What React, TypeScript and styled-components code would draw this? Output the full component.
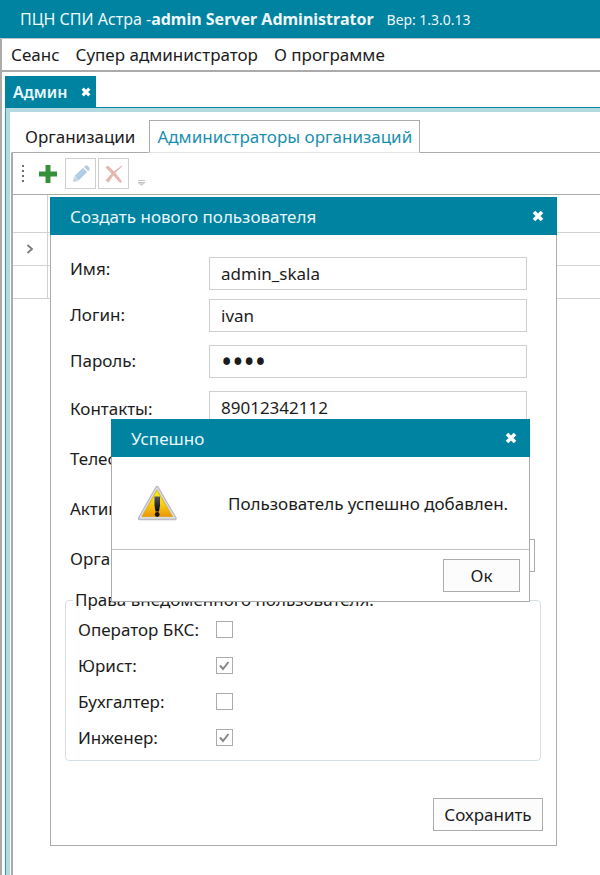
import React from "react";
import styled, { createGlobalStyle } from "styled-components";

const teal = "#0082a1";
const gray = "#ababab";

const GlobalStyle = createGlobalStyle`
  *, *::before, *::after { box-sizing: border-box; }
  html, body { margin: 0; background: #fff; }
  body, button, input, select {
    font-family: "Noto Sans", "Open Sans", sans-serif;
    font-size: 17px;
    color: #1c1c1c;
  }
`;

const Window = styled.div`
  position: relative;
  display: flex;
  flex-direction: column;
  min-height: 100vh;
  overflow: hidden;
`;

const TitleBar = styled.header`
  display: flex;
  align-items: center;
  gap: 13px;
  height: 39px;
  padding-left: 20px;
  background: ${teal};
  border-bottom: 1px solid #b5c5c9;
  color: #eef8fa;
  white-space: nowrap;
`;

const AppTitle = styled.h1`
  margin: 0;
  font-size: 16px;
  font-weight: 400;
`;

const Version = styled.span`
  font-size: 14px;
`;

const Frame = styled.div`
  display: flex;
  flex-direction: column;
  flex: 1;
  border-left: 2px solid ${gray};
`;

const MenuBar = styled.nav`
  display: flex;
  align-items: center;
  gap: 16px;
  height: 33px;
  padding-left: 9px;
  border-bottom: 2px solid ${gray};
`;

const MenuItem = styled.button`
  padding: 0;
  border: 0;
  background: none;
  white-space: nowrap;
`;

const DocumentTabs = styled.div`
  display: flex;
  padding: 4px 0 0 3px;
`;

const DocumentTab = styled.div`
  display: flex;
  align-items: center;
  gap: 14px;
  height: 31px;
  padding: 0 5px 0 8px;
  background: ${teal};
  color: #e8f6f9;
  font-size: 16px;
  font-weight: 600;
`;

const IconButton = styled.button`
  display: flex;
  align-items: center;
  justify-content: center;
  padding: 0;
  border: 0;
  background: none;
  color: #fff;
`;

const Workspace = styled.main`
  display: flex;
  flex-direction: column;
  flex: 1;
  margin-left: 3px;
  border-top: 1px solid ${teal};
  border-left: 1px solid #2f9cb6;
`;

const Panel = styled.div`
  display: flex;
  flex-direction: column;
  flex: 1;
  padding: 8px 0 0 1px;
  border-top: 4px solid #b3d9e1;
  border-left: 4px solid #b3d9e1;
`;

const TabStrip = styled.div`
  display: flex;
  height: 33px;
  box-shadow: inset 0 -1px 0 ${gray};
`;

const Tab = styled.button<{ $active?: boolean }>`
  padding: ${(p) => (p.$active ? "0 7px" : "0 13px")};
  border: 1px solid ${(p) => (p.$active ? gray : "transparent")};
  border-bottom-color: ${(p) => (p.$active ? "#e4e4e4" : gray)};
  background: #fff;
  color: ${(p) => (p.$active ? "#1a8fae" : "#1c1c1c")};
  white-space: nowrap;
`;

const TabBody = styled.div`
  display: flex;
  flex-direction: column;
  flex: 1;
  border-left: 2px solid ${gray};
`;

const Toolbar = styled.div`
  display: flex;
  align-items: center;
  height: 42px;
  padding-left: 8px;
  border-bottom: 1px solid ${gray};
`;

const ToolButton = styled.button<{ $framed?: boolean }>`
  display: flex;
  align-items: center;
  justify-content: center;
  width: 31px;
  height: 31px;
  margin-right: 2px;
  padding: 0;
  border: ${(p) => (p.$framed ? "1px solid #cfcfcf" : "0")};
  background: #fff;
`;

const Overflow = styled.div`
  align-self: flex-end;
  display: flex;
  padding: 0 0 8px 7px;
`;

const Records = styled.table`
  width: 100%;
  border-collapse: collapse;
  table-layout: fixed;
`;

const RecordCell = styled.td<{ $head?: boolean; $marker?: boolean }>`
  width: ${(p) => (p.$marker ? "34px" : "auto")};
  height: ${(p) => (p.$head ? "37px" : "33px")};
  padding: 0 0 0 13px;
  border-bottom: 1px solid #d2d2d2;
  border-right: ${(p) => (p.$marker ? "1px solid #d2d2d2" : "0")};
  line-height: 0;
`;

const UserDialog = styled.section`
  position: absolute;
  top: 197px;
  left: 50px;
  right: 43px;
  border: 1px solid ${gray};
  border-top: 0;
  background: #fff;
`;

const AlertDialog = styled.section`
  position: absolute;
  top: 419px;
  left: 111px;
  right: 70px;
  border: 1px solid ${gray};
  border-top: 0;
  background: #fff;
`;

const DialogTitle = styled.div`
  display: flex;
  align-items: center;
  justify-content: space-between;
  height: 38px;
  margin: 0 -1px;
  padding: 0 13px 0 20px;
  background: ${teal};
  color: #e8f6f9;
`;

const DialogHeading = styled.h2`
  margin: 0;
  font-size: 17px;
  font-weight: 400;
`;

const Form = styled.form`
  display: flex;
  flex-direction: column;
  padding: 10px 13px 14px 14px;
`;

const Field = styled.div<{ $tall?: boolean }>`
  display: grid;
  grid-template-columns: 139px 1fr;
  height: ${(p) => (p.$tall ? "50px" : "46px")};
  padding-left: 5px;
`;

const FieldLabel = styled.label`
  align-self: center;
`;

const TextInput = styled.input<{ $low?: boolean }>`
  width: calc(100% - 16px);
  height: 33px;
  margin-top: ${(p) => (p.$low ? "12px" : "8px")};
  padding: 0 11px;
  border: 1px solid #cfcfcf;
  border-radius: 0;
  background: #fff;
  outline: 0;
  &[type="password"] {
    font-size: 30px;
    line-height: 30px;
  }
`;

const Select = styled.select`
  width: calc(100% - 8px);
  height: 33px;
  margin-top: 6px;
  border: 1px solid ${gray};
  border-radius: 0;
  background: #fff;
  appearance: none;
`;

const Check = styled.input`
  appearance: none;
  align-self: center;
  width: 17px;
  height: 17px;
  margin: 0;
  border: 1px solid ${gray};
  background: #fff;
  &:checked {
    background: #fff
      url("data:image/svg+xml,%3Csvg xmlns='http://www.w3.org/2000/svg' viewBox='0 0 15 15'%3E%3Cpath d='M3 7.5 6 11 11.5 4' fill='none' stroke='%23858585' stroke-width='2'/%3E%3C/svg%3E")
      center / 15px 15px no-repeat;
  }
`;

const Rights = styled.fieldset`
  min-width: 0;
  margin: 6px 2px 0 0;
  padding: 0 12px 5px;
  border: 1px solid #d5e0e6;
  border-radius: 4px;
`;

const Legend = styled.legend`
  margin-left: -5px;
  padding: 0 2px;
  line-height: 22px;
`;

const Right = styled.div`
  display: grid;
  grid-template-columns: 138px 1fr;
  align-items: center;
  height: 36px;
`;

const PushButton = styled.button<{ $wide?: boolean }>`
  width: ${(p) => (p.$wide ? "110px" : "77px")};
  height: 33px;
  padding: 0;
  border: 1px solid ${gray};
  background: #fcfcfc;
`;

const FormActions = styled.div`
  display: flex;
  justify-content: flex-end;
  padding-top: 37px;
`;

const AlertBody = styled.div`
  display: flex;
  align-items: center;
  gap: 50px;
  height: 92px;
  padding: 0 0 0 25px;
  white-space: nowrap;
`;

const AlertText = styled.p`
  margin: 0;
`;

const AlertActions = styled.div`
  display: flex;
  justify-content: flex-end;
  padding: 9px;
  border-top: 1px solid #c4c4c4;
`;

const CloseIcon = ({ size = 12 }: { size?: number }) => (
  <svg width={size} height={size} viewBox="0 0 12 12" aria-hidden="true">
    <path d="M2 2 10 10M10 2 2 10" stroke="currentColor" strokeWidth="3.6" />
  </svg>
);

const Grip = styled.svg`
  flex: none;
  margin-right: 7px;
`;

const WarningIcon = () => (
  <svg width="41" height="36" viewBox="0 0 41 36" aria-hidden="true">
    <defs>
      <linearGradient id="amber" x1="0" y1="0" x2="0" y2="1">
        <stop offset="0" stopColor="#f5ef16" />
        <stop offset="0.5" stopColor="#f9d313" />
        <stop offset="1" stopColor="#ee9407" />
      </linearGradient>
      <linearGradient id="mark" x1="0" y1="0" x2="0" y2="1">
        <stop offset="0" stopColor="#556" />
        <stop offset="1" stopColor="#050505" />
      </linearGradient>
    </defs>
    <path d="M20 2.5 38 33.5H2.500Z" fill="#b9bcc2" stroke="#b9bcc2" strokeWidth="3.5" strokeLinejoin="round" />
    <path d="M20 3 37.500 33H3Z" fill="#dadce0" stroke="#dadce0" strokeWidth="1.500" strokeLinejoin="round" />
    <path d="M20 5 35.500 31.500H5Z" fill="url(#amber)" stroke="#d9a514" strokeWidth="0.800" strokeLinejoin="round" />
    <path d="M17.500 11.500h5.500v9l-1 6h-3.500l-1-6Z" fill="url(#mark)" />
    <circle cx="20.200" cy="29.500" r="2.400" fill="#15130c" />
  </svg>
);

const rights = [
  { id: "operator", label: "Оператор БКС:", on: false },
  { id: "lawyer", label: "Юрист:", on: true },
  { id: "accountant", label: "Бухгалтер:", on: false },
  { id: "engineer", label: "Инженер:", on: true },
];

export default function App() {
  return (
    <>
      <GlobalStyle />
      <Window>
        <TitleBar>
          <AppTitle>
            ПЦН СПИ Астра -<b>admin Server Administrator</b>
          </AppTitle>
          <Version>Вер: 1.3.0.13</Version>
        </TitleBar>
        <Frame>
          <MenuBar>
            <MenuItem>Сеанс</MenuItem>
            <MenuItem>Супер администратор</MenuItem>
            <MenuItem>О программе</MenuItem>
          </MenuBar>
          <DocumentTabs>
            <DocumentTab>
              Админ
              <IconButton aria-label="Закрыть вкладку">
                <CloseIcon size={10} />
              </IconButton>
            </DocumentTab>
          </DocumentTabs>
          <Workspace>
            <Panel>
              <TabStrip role="tablist">
                <Tab role="tab">Организации</Tab>
                <Tab role="tab" aria-selected $active>
                  Администраторы организаций
                </Tab>
              </TabStrip>
              <TabBody>
                <Toolbar>
                  <Grip width="4" height="18" viewBox="0 0 4 18">
                    <path d="M1 0h2v2H1zM1 5h2v2H1zM1 10h2v2H1zM1 15h2v2H1z" fill="#707070" />
                  </Grip>
                  <ToolButton aria-label="Добавить">
                    <svg width="18" height="18" viewBox="0 0 18 18">
                      <path d="M6.500 0h5v6.500H18v5h-6.500V18h-5v-6.500H0v-5h6.500Z" fill="#36903a" />
                    </svg>
                  </ToolButton>
                  <ToolButton $framed aria-label="Изменить">
                    <svg width="18" height="18" viewBox="0 0 18 18">
                      <path d="M1 17 2 11.500 6.500 16Z" fill="#c3d3e3" />
                      <path d="M2.500 11 11 3l4 4-8.500 8.500Z" fill="#adc9e4" />
                      <path d="m12 2 1.500-1.500h2L17.500 3v2L16 6Z" fill="#b4cbe1" />
                      <path d="M4 12.500 12 5" stroke="#c6daee" />
                    </svg>
                  </ToolButton>
                  <ToolButton $framed aria-label="Удалить">
                    <svg width="18" height="18" viewBox="0 0 18 18">
                      <path d="M1 2.500 3 1Q11 8 16.500 16.500L15 17.500Q8 9 1 2.500Z" fill="#e4b7b2" stroke="#e4b7b2" />
                      <path d="M17 1Q8 8 3.500 17L1 15.500Q7 7 17 1Z" fill="#e4b7b2" stroke="#e4b7b2" />
                    </svg>
                  </ToolButton>
                  <Overflow>
                    <svg width="7" height="6" viewBox="0 0 7 6">
                      <path d="M0 .5h7M0 2.500h7L3.500 5.500Z" fill="#ddd" stroke="#c8c8c8" />
                    </svg>
                  </Overflow>
                </Toolbar>
                <Records>
                  <tbody>
                    <tr>
                      <RecordCell $head $marker />
                      <RecordCell $head />
                    </tr>
                    <tr>
                      <RecordCell $marker>
                        <svg width="8" height="10" viewBox="0 0 8 10">
                          <path d="m1.500 1 4.500 4-4.500 4" fill="none" stroke="#7c7c7c" strokeWidth="1.800" />
                        </svg>
                      </RecordCell>
                      <RecordCell />
                    </tr>
                    <tr>
                      <RecordCell $marker />
                      <RecordCell />
                    </tr>
                  </tbody>
                </Records>
              </TabBody>
            </Panel>
          </Workspace>
        </Frame>

        <UserDialog role="dialog" aria-labelledby="user-heading">
          <DialogTitle>
            <DialogHeading id="user-heading">Создать нового пользователя</DialogHeading>
            <IconButton aria-label="Закрыть">
              <CloseIcon />
            </IconButton>
          </DialogTitle>
          <Form>
            <Field>
              <FieldLabel htmlFor="name">Имя:</FieldLabel>
              <TextInput id="name" defaultValue="admin_skala" $low />
            </Field>
            <Field>
              <FieldLabel htmlFor="login">Логин:</FieldLabel>
              <TextInput id="login" defaultValue="ivan" />
            </Field>
            <Field>
              <FieldLabel htmlFor="password">Пароль:</FieldLabel>
              <TextInput id="password" type="password" defaultValue="1234" />
            </Field>
            <Field $tall>
              <FieldLabel htmlFor="contacts">Контакты:</FieldLabel>
              <TextInput id="contacts" defaultValue="89012342112" />
            </Field>
            <Field $tall>
              <FieldLabel htmlFor="phone">Телефон:</FieldLabel>
              <Check id="phone" type="checkbox" />
            </Field>
            <Field $tall>
              <FieldLabel htmlFor="active">Активен:</FieldLabel>
              <Check id="active" type="checkbox" defaultChecked />
            </Field>
            <Field $tall>
              <FieldLabel htmlFor="organization">Организация:</FieldLabel>
              <Select id="organization" />
            </Field>
            <Rights>
              <Legend>Права внедоменного пользователя:</Legend>
              {rights.map((r) => (
                <Right key={r.id}>
                  <label htmlFor={r.id}>{r.label}</label>
                  <Check id={r.id} type="checkbox" defaultChecked={r.on} />
                </Right>
              ))}
            </Rights>
            <FormActions>
              <PushButton type="button" $wide>
                Сохранить
              </PushButton>
            </FormActions>
          </Form>
        </UserDialog>

        <AlertDialog role="alertdialog" aria-labelledby="alert-heading">
          <DialogTitle>
            <DialogHeading id="alert-heading">Успешно</DialogHeading>
            <IconButton aria-label="Закрыть">
              <CloseIcon />
            </IconButton>
          </DialogTitle>
          <AlertBody>
            <WarningIcon />
            <AlertText>Пользователь успешно добавлен.</AlertText>
          </AlertBody>
          <AlertActions>
            <PushButton>Ок</PushButton>
          </AlertActions>
        </AlertDialog>
      </Window>
    </>
  );
}
